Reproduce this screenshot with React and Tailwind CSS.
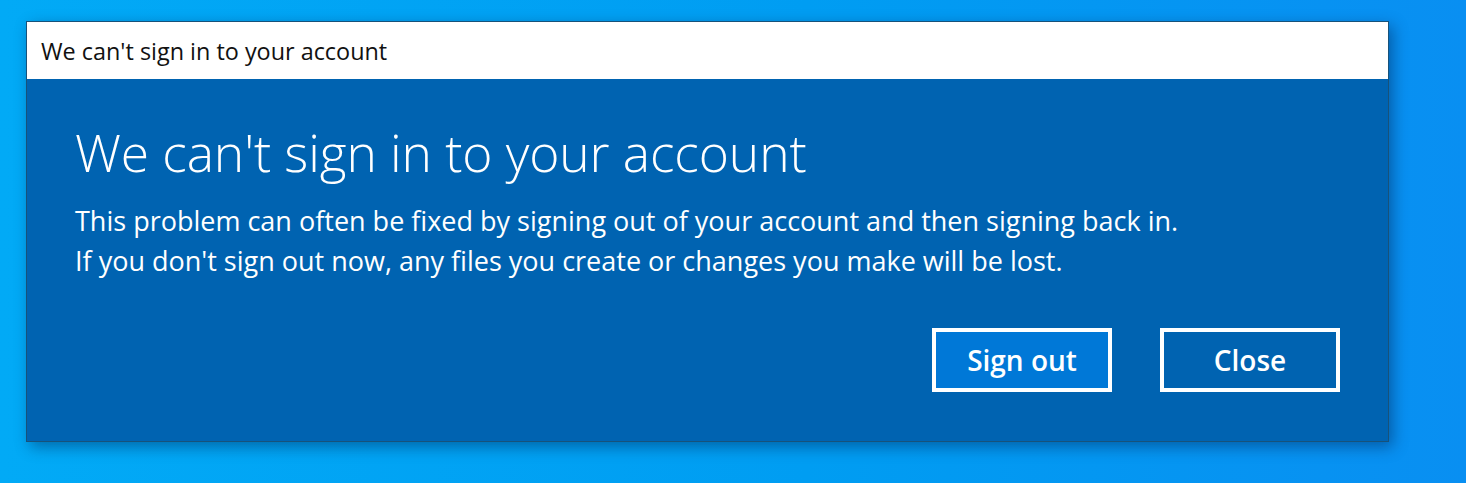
import React from "react";

export default function App() {
  return (
    <div className="w-[1466px] h-[483px] overflow-hidden bg-[linear-gradient(90deg,#02aaf6_0%,#009df2_55%,#098ff2_100%)] pt-[21px] pl-[26px] font-['Open_Sans',sans-serif]">
      <div className="w-[1363px] h-[421px] border border-[#17527a] bg-[#0063b1] shadow-[4px_5px_14px_rgba(0,30,80,0.45)] flex flex-col">
        <div className="h-[57px] bg-white pl-[14px] pt-[1px] text-[23.4px] leading-[57px] text-[#111]">
          We can't sign in to your account
        </div>
        <div className="flex-1 flex flex-col px-12 pt-[43px] text-white">
          <h1 className="text-[51.5px] font-light leading-[61px] tracking-[-0.1px]">
            We can't sign in to your account
          </h1>
          <p className="mt-[18px] text-[27px] leading-[40px]">
            This problem can often be fixed by signing out of your account and then signing back in.
            <br />
            If you don't sign out now, any files you create or changes you make will be lost.
          </p>
          <div className="mt-[47px] flex justify-end gap-[48px]">
            <button className="w-[180px] h-[64px] border-[4px] border-white bg-[#0078d7] text-[28px] font-semibold text-white flex items-center justify-center">
              Sign out
            </button>
            <button className="w-[180px] h-[64px] border-[4px] border-white bg-[#0063b1] text-[28px] font-semibold text-white flex items-center justify-center">
              Close
            </button>
          </div>
        </div>
      </div>
    </div>
  );
}
